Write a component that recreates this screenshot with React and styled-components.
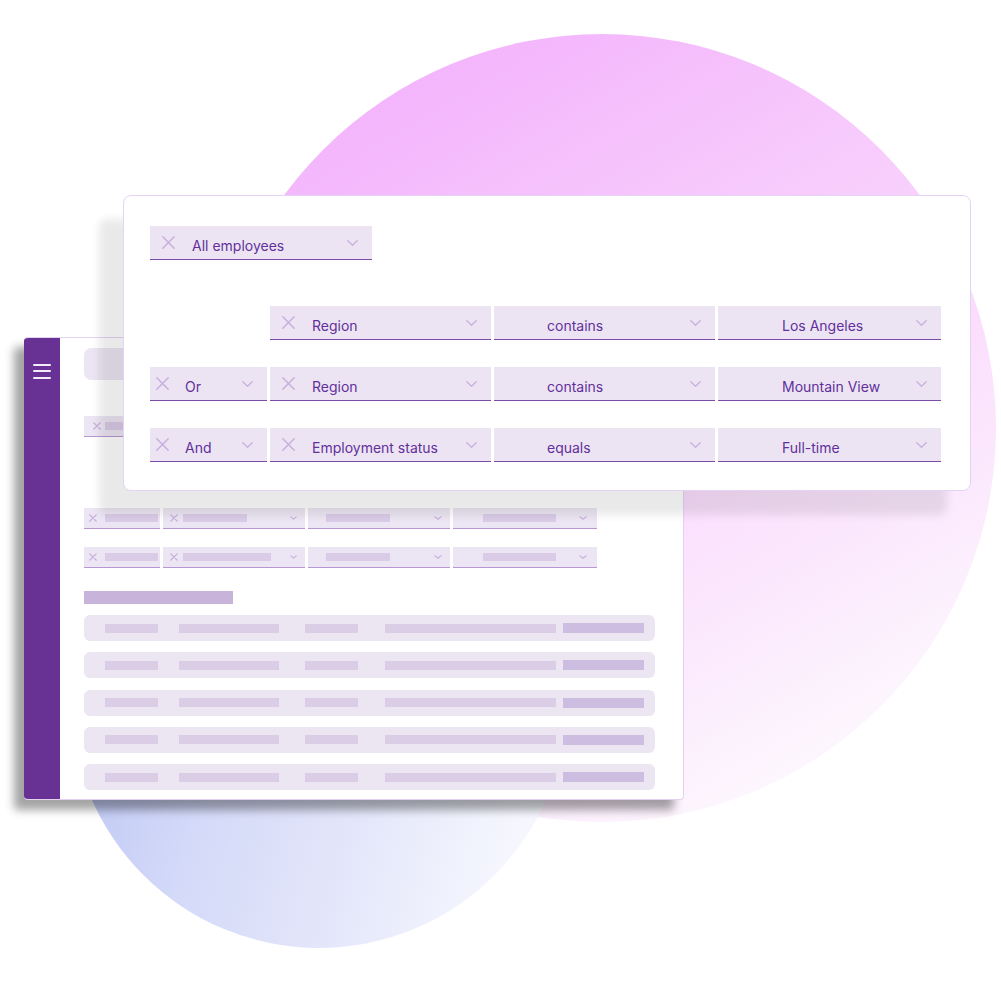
import React from 'react';
import styled, { createGlobalStyle } from 'styled-components';

const Global = createGlobalStyle`
  html, body { margin: 0; padding: 0; background: #ffffff; }
  body { font-family: Inter, "Noto Sans", Roboto, sans-serif; }
  * { box-sizing: border-box; }
`;

const Canvas = styled.div`
  position: relative;
  width: 1001px;
  height: 1001px;
  overflow: hidden;
  background: #ffffff;
`;

const Blob = styled.div`
  position: absolute;
  left: ${(p) => p.$x}px;
  top: ${(p) => p.$y}px;
  width: ${(p) => p.$size}px;
  height: ${(p) => p.$size}px;
  border-radius: 50%;
  background: ${(p) => p.$bg};
`;

/* ---------- back window ---------- */
const BackWindow = styled.div`
  position: absolute;
  left: 24px;
  top: 337px;
  width: 660px;
  height: 463px;
  display: flex;
  background: #ffffff;
  border: 1px solid #e3d2f2;
  border-left: none;
  border-radius: 4px;
  box-shadow: -10px 10px 10px rgba(0, 0, 0, 0.36);
  overflow: hidden;
`;

const Sidebar = styled.div`
  width: 36px;
  flex: none;
  background: #673294;
  display: flex;
  flex-direction: column;
  align-items: center;
  padding-top: 26px;
  gap: 4.3px;
`;

const BurgerLine = styled.span`
  display: block;
  width: 18px;
  height: 2px;
  border-radius: 1px;
  background: #f3ecf8;
`;

const BackContent = styled.div`
  flex: 1;
  display: flex;
  flex-direction: column;
  align-items: flex-start;
  padding: 10px 0 0 24px;
`;

const SearchBox = styled.div`
  width: 430px;
  height: 32px;
  border-radius: 7px;
  background: #ece5f3;
`;

const MiniChip = styled.div`
  margin-top: 36px;
  width: 170px;
  height: 21px;
  display: flex;
  align-items: center;
  padding-left: 9px;
  background: #ece5f3;
  border-bottom: 1.5px solid #b896d3;
`;

const MiniRow = styled.div`
  margin-top: ${(p) => p.$mt}px;
  display: grid;
  grid-template-columns: 76px 142px 142px 144px;
  column-gap: 3px;
`;

const MiniCell = styled.div`
  height: 21px;
  display: flex;
  align-items: center;
  padding-left: ${(p) => p.$pl}px;
  padding-right: ${(p) => p.$pr}px;
  background: #ece5f3;
  border-bottom: 1.5px solid #b896d3;
`;

const MiniBar = styled.span`
  display: block;
  height: 8px;
  width: ${(p) => p.$w}px;
  margin-left: ${(p) => p.$ml}px;
  background: #dacbe6;
`;

const Heading = styled.div`
  margin-top: 23px;
  width: 149px;
  height: 13px;
  background: #c8b3da;
`;

const Table = styled.div`
  margin-top: 11px;
  display: flex;
  flex-direction: column;
  gap: 11.25px;
`;

const TableRow = styled.div`
  width: 571px;
  height: 26px;
  display: flex;
  align-items: center;
  padding-left: 21px;
  border-radius: 6px;
  background: #ece6f3;
`;

const TableBar = styled.span`
  display: block;
  width: ${(p) => p.$w}px;
  height: ${(p) => (p.$strong ? 10 : 9)}px;
  margin-left: ${(p) => p.$ml}px;
  background: ${(p) => (p.$strong ? '#cdbde0' : '#dccde6')};
`;

/* ---------- front card ---------- */
const Card = styled.div`
  position: absolute;
  left: 123px;
  top: 195px;
  width: 848px;
  height: 296px;
  background: #ffffff;
  border: 1px solid #e5d3f5;
  border-radius: 8px;
  box-shadow: -24px 24px 8px rgba(0, 0, 0, 0.085);
  padding: 30px 0 0 26px;
`;

const FilterGrid = styled.div`
  margin-top: 46px;
  display: grid;
  grid-template-columns: 117px 221px 221px 223px;
  column-gap: 3px;
  row-gap: 27px;
`;

const Cell = styled.div`
  width: ${(p) => (p.$w ? `${p.$w}px` : 'auto')};
  height: 34px;
  display: flex;
  align-items: center;
  padding-left: ${(p) => p.$pl}px;
  background: #ece4f3;
  border-bottom: 1.5px solid #7a4ca8;
`;

const Empty = styled.div``;

const Label = styled.span`
  margin-left: ${(p) => p.$ml || 0}px;
  padding-top: 7px;
  font-size: 14px;
  line-height: 16px;
  font-weight: 400;
  color: #62309a;
  white-space: nowrap;
`;

const ChevronSlot = styled.span`
  margin-left: auto;
  margin-right: ${(p) => p.$mr}px;
  display: flex;
  align-items: center;
`;

const XIcon = ({ size = 13, color = '#c7afdd', stroke = 1.5 }) => (
  <svg width={size} height={size} viewBox={`0 0 ${size} ${size}`} style={{ display: 'block', flex: 'none' }}>
    <path d={`M0.8 0.8 L${size - 0.8} ${size - 0.8} M${size - 0.8} 0.8 L0.8 ${size - 0.8}`} stroke={color} strokeWidth={stroke} strokeLinecap="round" fill="none" />
  </svg>
);

const Chevron = ({ w = 11, h = 6, color = '#cbb3e0', stroke = 1.5 }) => (
  <svg width={w} height={h} viewBox={`0 0 ${w} ${h}`} style={{ display: 'block' }}>
    <path d={`M0.8 0.8 L${w / 2} ${h - 0.8} L${w - 0.8} 0.8`} stroke={color} strokeWidth={stroke} strokeLinecap="round" strokeLinejoin="round" fill="none" />
  </svg>
);

const FilterCell = ({ label, x, xLeft, textLeft, w }) => (
  <Cell $pl={x ? xLeft : textLeft} $w={w}>
    {x && <XIcon />}
    <Label $ml={x ? textLeft - xLeft - 13 : 0}>{label}</Label>
    <ChevronSlot $mr={14}>
      <Chevron />
    </ChevronSlot>
  </Cell>
);

const miniRows = [
  { mt: 71, bar1: 64 },
  { mt: 18, bar1: 88 },
];

const tableBars = [
  { w: 53, ml: 0 },
  { w: 100, ml: 21 },
  { w: 53, ml: 26 },
  { w: 171, ml: 27 },
  { w: 81, ml: 7, strong: true },
];

const filterRows = [
  { op: null, field: 'Region', cmp: 'contains', val: 'Los Angeles' },
  { op: 'Or', field: 'Region', cmp: 'contains', val: 'Mountain View' },
  { op: 'And', field: 'Employment status', cmp: 'equals', val: 'Full-time' },
];

export default function App() {
  return (
    <Canvas>
      <Global />
      <Blob
        $x={208}
        $y={34}
        $size={788}
        $bg="linear-gradient(150deg, #f0adfb 0%, #f4b8fc 17%, #f8d0fc 45%, #fbe3fd 64%, #fbe8fd 71%, #fdf5fe 85%, #fffdff 100%)"
      />
      <Blob
        $x={71}
        $y={452}
        $size={496}
        $bg="linear-gradient(105deg, #bac4f5 8%, #d3d9f8 35%, #e3e6fa 60%, #f6f7fe 88%)"
      />

      <BackWindow>
        <Sidebar>
          <BurgerLine />
          <BurgerLine />
          <BurgerLine />
        </Sidebar>
        <BackContent>
          <SearchBox />
          <MiniChip>
            <XIcon size={8} color="#c4aad9" stroke={1.2} />
            <MiniBar $w={80} $ml={4} />
          </MiniChip>
          {miniRows.map((r, i) => (
            <MiniRow key={i} $mt={r.mt}>
              <MiniCell $pl={5} $pr={0}>
                <XIcon size={8} color="#c4aad9" stroke={1.2} />
                <MiniBar $w={53} $ml={8} />
              </MiniCell>
              <MiniCell $pl={7} $pr={8}>
                <XIcon size={8} color="#c4aad9" stroke={1.2} />
                <MiniBar $w={r.bar1} $ml={5} />
                <ChevronSlot $mr={0}>
                  <Chevron w={7} h={4} color="#c9b0de" stroke={1.1} />
                </ChevronSlot>
              </MiniCell>
              <MiniCell $pl={18} $pr={8}>
                <MiniBar $w={64} $ml={0} />
                <ChevronSlot $mr={0}>
                  <Chevron w={8} h={4} color="#c9b0de" stroke={1.1} />
                </ChevronSlot>
              </MiniCell>
              <MiniCell $pl={30} $pr={10}>
                <MiniBar $w={73} $ml={0} />
                <ChevronSlot $mr={0}>
                  <Chevron w={8} h={4} color="#c9b0de" stroke={1.1} />
                </ChevronSlot>
              </MiniCell>
            </MiniRow>
          ))}
          <Heading />
          <Table>
            {[0, 1, 2, 3, 4].map((r) => (
              <TableRow key={r}>
                {tableBars.map((b, i) => (
                  <TableBar key={i} $w={b.w} $ml={b.ml} $strong={b.strong} />
                ))}
              </TableRow>
            ))}
          </Table>
        </BackContent>
      </BackWindow>

      <Card>
        <FilterCell label="All employees" x xLeft={12} textLeft={42} w={222} />
        <FilterGrid>
          {filterRows.map((r, i) => (
            <React.Fragment key={i}>
              {r.op ? <FilterCell label={r.op} x xLeft={6} textLeft={35} /> : <Empty />}
              <FilterCell label={r.field} x xLeft={12} textLeft={42} />
              <FilterCell label={r.cmp} textLeft={53} />
              <FilterCell label={r.val} textLeft={64} />
            </React.Fragment>
          ))}
        </FilterGrid>
      </Card>
    </Canvas>
  );
}
